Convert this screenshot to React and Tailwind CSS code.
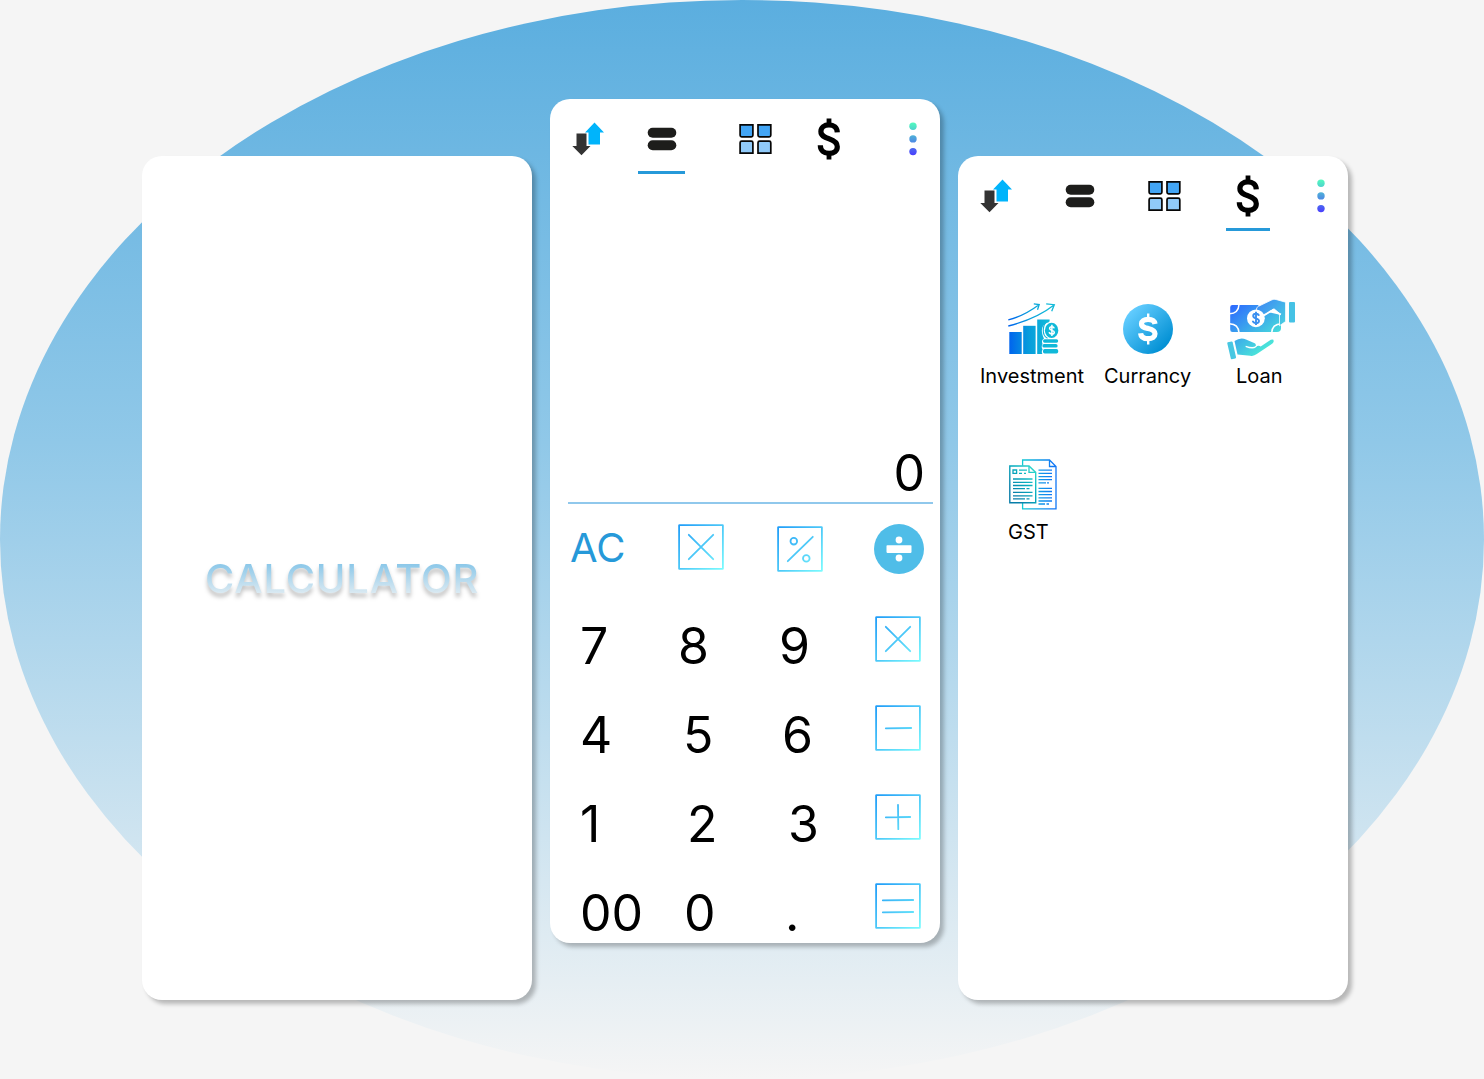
import React from "react";

function Gradient({ id, from, via, to, x1 = 0, y1 = 0, x2, y2 }) {
  return (
    <defs>
      <linearGradient id={id} gradientUnits="userSpaceOnUse" x1={x1} y1={y1} x2={x2} y2={y2}>
        <stop offset="0" stopColor={from} />
        {via && <stop offset="0.5" stopColor={via} />}
        <stop offset="1" stopColor={to} />
      </linearGradient>
    </defs>
  );
}

function ArrowsIcon() {
  return (
    <svg width="32" height="34" viewBox="0 0 32 34" className="block">
      <path d="M22.5 0.5 32 10.5H28V22.5H16.5V10.5H13Z" fill="#00b4fb" />
      <path d="M4.5 11.5H14.5V24H18.5L9.5 33.3.3 24H4.5Z" fill="#333" />
    </svg>
  );
}

function EqualsIcon() {
  return (
    <svg width="30" height="24" viewBox="0 0 30 24" className="block">
      <rect x="0.7" y="0.7" width="28.6" height="10" rx="5" fill="#1d1d1b" />
      <rect x="0.7" y="13.3" width="28.6" height="10" rx="5" fill="#1d1d1b" />
    </svg>
  );
}

function GridIcon() {
  return (
    <svg width="33" height="30" viewBox="0 0 33 30" className="block">
      <g stroke="#060606" strokeWidth="1.7" >
        <path d="M1.1.9H13.9V11.2Q13.9 12.8 12.3 12.8H2.7Q1.1 12.8 1.1 11.2Z" fill="#42a5f5" />
        <path d="M19 .9H31.8V11.2Q31.8 12.8 30.2 12.8H20.6Q19 12.8 19 11.2Z" fill="#42a5f5" />
        <path d="M1.1 29.1H13.9V18.8Q13.9 17.2 12.3 17.2H2.7Q1.1 17.2 1.1 18.8Z" fill="#90caf9" />
        <path d="M19 29.1H31.8V18.8Q31.8 17.2 30.2 17.2H20.6Q19 17.2 19 18.8Z" fill="#90caf9" />
      </g>
    </svg>
  );
}

function DollarIcon() {
  return (
    <svg width="24" height="42" viewBox="0 0 24 42" className="block" fill="none" stroke="#000">
      <path d="M12 .5V7M12 35V41.5" strokeWidth="4.8" />
      <path d="M20.3 14.4C20.1 9.5 16.6 6.8 12 6.8C7.2 6.8 3.9 9.6 3.9 13.5C3.9 17.8 7.3 19.2 12 20.8C17 22.5 20.3 24.3 20.3 28.7C20.3 32.9 16.9 35.4 12.2 35.4C6.8 35.4 3.4 32.6 3.3 27.3" strokeWidth="5.2" />
    </svg>
  );
}

function DotsIcon({ id }) {
  return (
    <svg width="8" height="34" viewBox="0 0 8 34" className="block">
      <Gradient id={id} from="#52ffbd" to="#4a3aff" x2={0} y2={34} />
      <g fill={`url(#${id})`}>
        <circle cx="4" cy="4.2" r="3.7" />
        <circle cx="4" cy="16.9" r="3.7" />
        <circle cx="4" cy="29.6" r="3.7" />
      </g>
    </svg>
  );
}

function SquareIcon({ id, children }) {
  return (
    <svg width="46" height="46" viewBox="0 0 46 46" className="block" fill="none">
      <Gradient id={id} from="#1e9bf8" via="#4cc8f8" to="#7dfdfe" x2={46} y2={46} />
      <g stroke={`url(#${id})`} strokeWidth="1.8">
        <rect x="1.1" y="1.1" width="43.8" height="43.8" rx="0.4" />
        <g strokeLinecap="round">{children}</g>
      </g>
    </svg>
  );
}

const CROSS = <path d="M10.8 10.8 35.2 35.2M35.2 10.8 10.8 35.2" />;

function DivideIcon() {
  return (
    <svg width="50" height="50" viewBox="0 0 50 50" className="block">
      <circle cx="25" cy="25" r="25" fill="#4fbde8" />
      <g fill="#fff">
        <circle cx="25" cy="16" r="3.4" />
        <rect x="12.5" y="21.2" width="25" height="7.7" rx="0.8" />
        <circle cx="25" cy="34" r="3.4" />
      </g>
    </svg>
  );
}

function InvestmentIcon() {
  return (
    <svg width="52" height="52" viewBox="0 0 52 52" className="block" fill="none">
      <Gradient id="invest" from="#0060ef" via="#079bdc" to="#10b9d9" x2={40} y2={0} />
      <g fill="url(#invest)">
        <rect x="1.3" y="29" width="12.4" height="22" />
        <rect x="15.2" y="22.8" width="12.4" height="28.2" />
        <path d="M29.2 16.6H41.6V18.5C36 20 33.3 24 34 29.5C34.4 32.5 35.5 34.3 36 35.5C33.5 37 33.8 39 34.5 41C33.3 43 33.6 45 34.6 46.5C33.6 48 33.6 50 34.4 51H29.2Z" />
        <rect x="35" y="36.2" width="15.2" height="3.5" rx="1.7" />
        <rect x="34.4" y="41.1" width="15.2" height="3.5" rx="1.7" />
        <rect x="35" y="46" width="15.2" height="4.5" rx="1.7" />
        <ellipse cx="43.6" cy="27.4" rx="6.7" ry="7.6" />
      </g>
      <g stroke="url(#invest)" strokeWidth="1.3">
        <path d="M.3 16.8C10.5 14.5 21.5 8.8 31 1.8M25.8.9 31.2 1.6 29.5 6.7" />
        <path d="M.3 23C18.5 18.4 33.5 12 46 2M38.2.9 46.3 1.7 43.7 8.2" />
        <path d="M40.8 18.8C33.8 19.5 33.5 32.5 39.5 35.2" strokeWidth="1.1" />
      </g>
      <g stroke="#fff" strokeWidth="1.5">
        <path d="M46.2 25.4C45.8 23.3 41.6 23.3 41.6 25.6C41.6 28 46.3 26.7 46.3 29.2C46.3 31.6 41.5 31.6 41.2 29.2M43.9 21.8V33" />
      </g>
    </svg>
  );
}

function CurrencyIcon() {
  return (
    <svg width="50" height="50" viewBox="0 0 50 50" className="block">
      <Gradient id="coin" from="#64cdff" to="#008fd3" x1={7} y1={7} x2={43} y2={43} />
      <circle cx="25" cy="25" r="25" fill="url(#coin)" />
      <g fill="none" stroke="#fff">
        <path d="M25.2 9.5V15M25.2 35V40.5" strokeWidth="2.4" />
        <path d="M32 20C31.5 16.7 29 15.4 25 15.4C21 15.4 18.5 17.1 18.5 19.7C18.5 23 21.5 23.6 25.2 24.5C29 25.4 32 26.4 32 29.8C32 32.9 29.3 34.7 25.2 34.7C20.5 34.7 17.9 33 17.6 29.2" strokeWidth="5.2" />
      </g>
    </svg>
  );
}

function LoanIcon() {
  return (
    <svg width="68" height="62" viewBox="0 0 68 62" className="block">
      <Gradient id="loan" from="#2c68ff" to="#4ff7d3" x1={8} y1={3} x2={48} y2={52} />
      <Gradient id="loanSleeve" from="#3e90f2" to="#4ad9df" x1={38} y1={0} x2={66} y2={24} />
      <path d="M3.2 8.2Q3.2 6 5.5 6H31L36 12L54 16V28Q54.5 33 50 33H5.5Q3.2 33 3.2 30.5Z" fill="url(#loan)" />
      <g fill="none" stroke="#fff" strokeWidth="1.5">
        <path d="M2.5 14.8Q11.5 14.5 12 5.5M2.5 24.7Q11.5 25 12 33.8M54.5 24.7Q45 25 44.7 33.8" />
      </g>
      <path d="M29.5 11.2Q29 8.2 31.5 7.3L45 .8Q46.8-.2 49 .5L58.6 3.2V22.5L52.5 26.8V14.3L47 9.8L36.3 17.2Q31.5 17.5 29.5 11.2Z" fill="url(#loanSleeve)" stroke="#fff" strokeWidth="0.8" />
      <path d="M34 17.7Q37.3 16.3 40 14.6L46 10.8Q49 14 54 15.4" fill="none" stroke="#fff" strokeWidth="1.8" />
      <rect x="62" y="3" width="6" height="20.6" rx="1" fill="#45c2e5" />
      <circle cx="28.9" cy="19.3" r="8.9" fill="#fff" />
      <path d="M31.8 16.8C31.5 14.2 26.2 14 26.2 17C26.2 20 32 18.8 32 22C32 25 26 24.7 25.8 21.8M29 12.8V26" fill="none" stroke="#3a8ff0" strokeWidth="1.9" />
      <path d="M.8 43.3 4.6 42.4Q5.4 42.3 5.6 43.1L9 58Q9.2 59.2 8.2 59.4L4.8 60.2Q4 60.3 3.8 59.5L.3 44.5Q.1 43.6.8 43.3Z" fill="#48c7e2" />
      <path d="M7.5 42.1Q13.5 37.8 19 40.5Q22.4 42.3 26 43.4Q29.5 44.1 28.8 46.7Q26.8 49.2 18.8 46.8L18.5 48.1Q26 51 29 48.3Q31 45.8 33.7 47.5L43.8 40.8Q47.2 39.4 46.6 42.8Q46.3 44 44.8 44.9L29.8 55.1Q26.8 57.5 23.2 56.7L10.5 55.4Z" fill="url(#loan)" />
    </svg>
  );
}

function GstIcon() {
  return (
    <svg width="48" height="51" viewBox="0 0 48 51" className="block" fill="none">
      <Gradient id="gstBack" from="#11cdd2" to="#1177f5" x1={12} y1={0} x2={44} y2={0} />
      <Gradient id="gstFront" from="#087ea9" via="#08aebf" to="#35e0cf" x1={0} y1={28} x2={27} y2={8} />
      <g stroke="url(#gstBack)" strokeWidth="1.3">
        <path d="M13.6 6.5V1H40.5L47 7.5V49.8H13.6V44M40.5 1V7.5H47" />
        <path d="M29.5 11.2H43M29.5 14.4H43M29.5 17.7H43M29.5 20.7H43M29.5 23.8H37M38 23.8H40M29.5 29.3H43M29.5 32.5H43M29.5 35.7H43M29.5 38.9H43M29.5 42H43M29.5 45H36M37.5 45H40" />
      </g>
      <path d="M.8 7H20L26.7 13.4V43.7H.8Z" fill="#fff" stroke="url(#gstFront)" strokeWidth="1.4" />
      <g stroke="url(#gstFront)" strokeWidth="1.3">
        <path d="M20 7V13.4H26.7M4 11H7.6V14.3H4ZM10 11.2H18M10 14.3H13M15 14.3H17M4 20H23.5M4 23.3H23.5M4 26.5H23.5M4 29.7H16M17.5 29.7H20.5M4 33.3H23.5M4 36.8H23.5M4 39.8H16M17.5 39.8H20.5" />
      </g>
    </svg>
  );
}

function Phone({ className = "", children }) {
  return (
    <section className={`h-[844px] w-[390px] shrink-0 overflow-hidden rounded-[20px] bg-white shadow-[4px_4px_4px_rgba(0,0,0,0.25)] ${className}`}>
      {children}
    </section>
  );
}

function Digit({ className, children }) {
  return <span className={`w-[60px] shrink-0 text-[50px] leading-[60px] ${className}`}>{children}</span>;
}

function KeyRow({ digits, offsets, icon }) {
  return (
    <div className="grid h-[89px] grid-cols-[98px_101px_96px_46px] items-start pl-[30px]">
      {digits.map((d, i) => (
        <Digit key={d} className={offsets[i]}>{d}</Digit>
      ))}
      {icon}
    </div>
  );
}

export default function App() {
  return (
    <main className="relative h-[1079px] w-[1484px] overflow-hidden bg-[#f5f5f5] font-['Inter',sans-serif] text-black">
      <div className="absolute inset-0 rounded-[50%] bg-[linear-gradient(180deg,#5baedf_0%,#90c8e8_41%,#f5f5f5_100%)]" />
      <div className="relative flex items-start gap-[18px] pl-[142px] pt-[99px]">
        <Phone className="mt-[57px]">
          <h1 className="ml-[63px] mt-[399px] w-max bg-[linear-gradient(180deg,#73bde6_0%,#f5f5f5_100%)] bg-clip-text text-[40px] font-medium leading-[48px] tracking-[0.8px] text-transparent drop-shadow-[0_4px_2px_rgba(0,0,0,0.25)]">
            CALCULATOR
          </h1>
        </Phone>

        <Phone>
          <nav className="flex h-[76px] items-start pl-[22px]">
            <div className="mt-[23px]"><ArrowsIcon /></div>
            <div className="ml-[34px] flex h-[75px] w-[47px] flex-col items-center justify-between border-b-[3px] border-[#2699d9] pt-[28px]">
              <EqualsIcon />
            </div>
            <div className="ml-[54px] mt-[25px]"><GridIcon /></div>
            <div className="ml-[45px] mt-[19px]"><DollarIcon /></div>
            <div className="ml-[68px] mt-[23px]"><DotsIcon id="dotsCalc" /></div>
          </nav>
          <output className="mt-[268px] block pr-[15px] text-right text-[50px] leading-[60px]">0</output>
          <hr className="ml-[18px] mr-[7px] -mt-px border-0 border-t-2 border-[#90c8ec]" />
          <div className="flex h-[111px] items-start">
            <span className="ml-[20px] mt-[20px] w-[108px] text-[40px] leading-[48px] text-[#2699d9]">AC</span>
            <div className="mt-[20px]"><SquareIcon id="sqClear">{CROSS}</SquareIcon></div>
            <div className="ml-[53px] mt-[22px]">
              <SquareIcon id="sqPercent">
                <path d="M10.8 35.2 35.8 10.8" />
                <circle cx="16.8" cy="15.2" r="3.3" />
                <circle cx="29.3" cy="32.4" r="3.3" />
              </SquareIcon>
            </div>
            <div className="ml-[51px] mt-[20px]"><DivideIcon /></div>
          </div>
          <div className="pt-px">
            <KeyRow digits={["7", "8", "9"]} offsets={["", "", ""]} icon={<SquareIcon id="sqTimes">{CROSS}</SquareIcon>} />
            <KeyRow digits={["4", "5", "6"]} offsets={["", "ml-[5px]", "ml-[3px]"]} icon={<SquareIcon id="sqMinus"><path d="M10.8 23.3 36.2 23" /></SquareIcon>} />
            <KeyRow digits={["1", "2", "3"]} offsets={["", "ml-[9px]", "ml-[9px]"]} icon={<SquareIcon id="sqPlus"><path d="M10.8 23.3 35.2 23M23 10.8 23.3 35.2" /></SquareIcon>} />
            <KeyRow digits={["00", "0", "."]} offsets={["", "ml-[6px]", "ml-[6px]"]} icon={<SquareIcon id="sqEquals"><path d="M7.8 17.3 38.2 17M7.8 29.3 38.2 29" /></SquareIcon>} />
          </div>
        </Phone>

        <Phone className="mt-[57px]">
          <nav className="flex h-[76px] items-start pl-[22px]">
            <div className="mt-[23px]"><ArrowsIcon /></div>
            <div className="ml-[53px] mt-[28px]"><EqualsIcon /></div>
            <div className="ml-[53px] mt-[25px]"><GridIcon /></div>
            <div className="ml-[45px] flex h-[75px] w-[44px] flex-col items-center border-b-[3px] border-[#2699d9] pt-[19px]">
              <DollarIcon />
            </div>
            <div className="ml-[47px] mt-[23px]"><DotsIcon id="dotsFinance" /></div>
          </nav>
          <div className="flex items-start pl-[22px] pt-[66px] text-[20px] leading-[24px]">
            <div className="flex w-[124px] flex-col">
              <div className="ml-[28px] flex h-[66px] items-start pt-[5px]"><InvestmentIcon /></div>
              <span>Investment</span>
            </div>
            <div className="flex w-[123px] flex-col">
              <div className="ml-[19px] flex h-[66px] items-start pt-[6px]"><CurrencyIcon /></div>
              <span>Currancy</span>
            </div>
            <div className="flex flex-col">
              <div className="flex h-[66px] items-start pt-px"><LoanIcon /></div>
              <span className="ml-[9px]">Loan</span>
            </div>
          </div>
          <div className="ml-[50px] mt-[71px] text-[20px] leading-[24px]">
            <div className="ml-px h-[61px]"><GstIcon /></div>
            <span className="block">GST</span>
          </div>
        </Phone>
      </div>
    </main>
  );
}
